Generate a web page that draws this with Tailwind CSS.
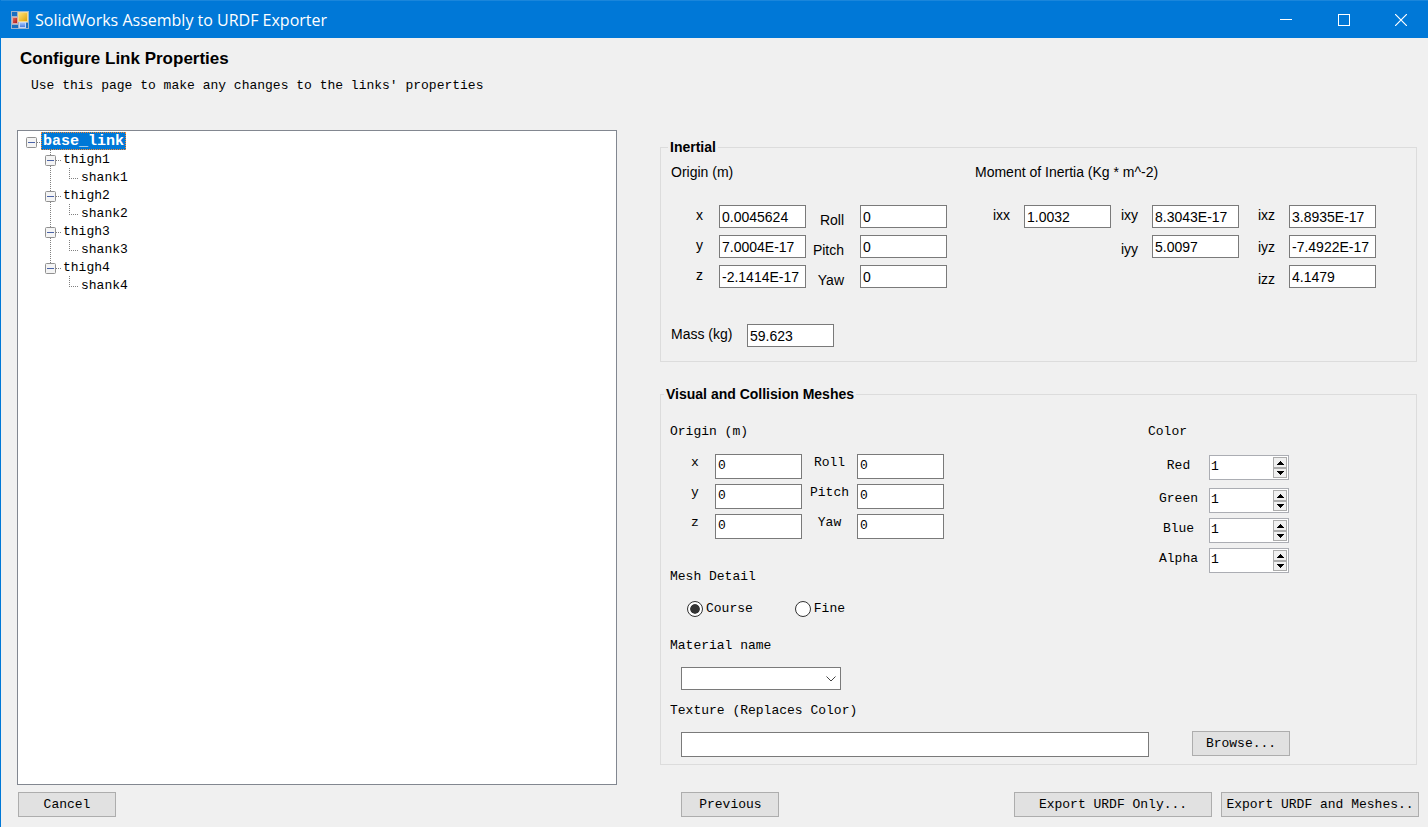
<!DOCTYPE html>
<html lang="en">
<head>
<meta charset="utf-8">
<meta name="viewport" content="width=device-width, initial-scale=1">
<title>SolidWorks Assembly to URDF Exporter</title>
<script src="https://cdn.jsdelivr.net/npm/@tailwindcss/browser@4"></script>
</head>
<body class="flex min-h-screen flex-col border-l border-[#0078d7] bg-[#f0f0f0] font-['Liberation_Mono',monospace] text-[13px] leading-5 text-black">

<!-- Shared symbols -->
<svg class="hidden">
  <symbol id="toggle" viewBox="0 0 11 11"><rect x=".5" y=".5" width="10" height="10" rx="1" fill="#f4f4f4" stroke="#919191"/><path d="M2 5.5h7" stroke="#4b63a7"/></symbol>
  <symbol id="branch" viewBox="0 0 20 18"><path d="M9.5 0v18M15 10.500h5" stroke="#808080" stroke-dasharray="1 1" fill="none"/><use href="#toggle" x="4" y="5" width="11" height="11"/></symbol>
  <symbol id="branch-last" viewBox="0 0 20 18"><path d="M9.5 0v6M15 10.500h5" stroke="#808080" stroke-dasharray="1 1" fill="none"/><use href="#toggle" x="4" y="5" width="11" height="11"/></symbol>
  <symbol id="leaf" viewBox="0 0 38 18"><path d="M9.5 0v18M28.500 0v10M28 10.500h10" stroke="#808080" stroke-dasharray="1 1" fill="none"/></symbol>
  <symbol id="leaf-last" viewBox="0 0 38 18"><path d="M28.500 0v10M28 10.500h10" stroke="#808080" stroke-dasharray="1 1" fill="none"/></symbol>
  <symbol id="up" viewBox="0 0 7 4"><path d="M3 0h1v1h1v1h1v1h1v1H0V3h1V2h1V1h1z"/></symbol>
  <symbol id="down" viewBox="0 0 7 4"><path d="M0 0h7v1H6v1H5v1H4v1H3V3H2V2H1V1H0z"/></symbol>
</svg>

<header class="flex h-[38px] items-center border-t border-[#1a86db] bg-[#0078d7] pl-[10px] text-white">
  <svg class="size-[18px]" viewBox="0 0 18 18">
    <defs>
      <linearGradient id="gold" x1="0" y1="0" x2="1" y2="1"><stop offset="0" stop-color="#ffe680"/><stop offset="1" stop-color="#e0a000"/></linearGradient>
      <linearGradient id="ruby" x1="0" y1="0" x2="1" y2="1"><stop offset="0" stop-color="#e8705f"/><stop offset="1" stop-color="#a81010"/></linearGradient>
      <linearGradient id="azure" x1="0" y1="0" x2="0" y2="1"><stop offset="0" stop-color="#a8c8ff"/><stop offset="1" stop-color="#4478dc"/></linearGradient>
    </defs>
    <rect width="18" height="18" fill="#9db4cc"/>
    <path d="M1 1h5v4H1zM1 14h6v3H1zM15 12h2v5h-2z" fill="#1a6fc0"/>
    <rect x="7.500" y="1.500" width="9" height="9" fill="url(#gold)" stroke="#f4dc90"/>
    <rect x="1.500" y="6.500" width="5" height="6" fill="url(#ruby)" stroke="#d8a8a8"/>
    <rect x="8.500" y="11.500" width="6" height="5" fill="url(#azure)" stroke="#c3d6f7"/>
  </svg>
  <h1 class="ml-1.5 flex-1 font-['Open_Sans',sans-serif] text-[16px]">SolidWorks Assembly to URDF Exporter</h1>
  <div class="flex">
    <button aria-label="Minimize" class="flex h-9 w-[56px] items-center justify-center"><svg class="size-3" viewBox="0 0 12 12"><path d="M0 5.500h12" stroke="#fff"/></svg></button>
    <button aria-label="Maximize" class="flex h-9 w-[60px] items-center justify-center"><svg class="size-3" viewBox="0 0 12 12"><rect x=".5" y=".5" width="11" height="11" fill="none" stroke="#fff"/></svg></button>
    <button aria-label="Close" class="flex h-9 w-[54px] items-center justify-center"><svg class="size-3" viewBox="0 0 12 12"><path d="M0 0l12 12M12 0L0 12" stroke="#fff" stroke-width="1.200"/></svg></button>
  </div>
</header>

<div class="pt-[11px] pl-[19px]">
  <h2 class="font-['Liberation_Sans',sans-serif] text-[17px] font-bold">Configure Link Properties</h2>
  <p class="mt-[7px] pl-[11px]">Use this page to make any changes to the links' properties</p>
</div>

<main class="mt-[34px] grid flex-1 grid-cols-[600fr_757fr] gap-x-[43px] pr-[11px] pl-4">
  <nav aria-label="Links" class="border border-[#828790] bg-white pt-px">
    <ul>
      <li>
        <div class="flex h-[18px] pl-2">
          <svg class="h-[18px] w-[15px]" viewBox="0 0 15 18"><use href="#toggle" x="0" y="5" width="11" height="11"/><path d="M11 10.500h4" stroke="#808080" stroke-dasharray="1 1"/></svg>
          <a href="#base_link" class="h-[18px] bg-[#0078d7] px-0.5 text-[15px] font-bold text-white outline-1 -outline-offset-1 outline-dotted outline-[#ff8728]">base_link</a>
        </div>
        <ul class="pl-[23px]">
          <li>
            <div class="flex h-[18px] gap-0.5"><svg class="h-[18px] w-5"><use href="#branch"/></svg><a href="#thigh1">thigh1</a></div>
            <ul><li class="flex h-[18px] gap-0.5"><svg class="h-[18px] w-[38px]"><use href="#leaf"/></svg><a href="#shank1">shank1</a></li></ul>
          </li>
          <li>
            <div class="flex h-[18px] gap-0.5"><svg class="h-[18px] w-5"><use href="#branch"/></svg><a href="#thigh2">thigh2</a></div>
            <ul><li class="flex h-[18px] gap-0.5"><svg class="h-[18px] w-[38px]"><use href="#leaf"/></svg><a href="#shank2">shank2</a></li></ul>
          </li>
          <li>
            <div class="flex h-[18px] gap-0.5"><svg class="h-[18px] w-5"><use href="#branch"/></svg><a href="#thigh3">thigh3</a></div>
            <ul><li class="flex h-[18px] gap-0.5"><svg class="h-[18px] w-[38px]"><use href="#leaf"/></svg><a href="#shank3">shank3</a></li></ul>
          </li>
          <li>
            <div class="flex h-[18px] gap-0.5"><svg class="h-[18px] w-5"><use href="#branch-last"/></svg><a href="#thigh4">thigh4</a></div>
            <ul><li class="flex h-[18px] gap-0.5"><svg class="h-[18px] w-[38px]"><use href="#leaf-last"/></svg><a href="#shank4">shank4</a></li></ul>
          </li>
        </ul>
      </li>
    </ul>
  </nav>

  <div class="flex flex-col gap-[22px] pt-[7px] pb-5">
    <fieldset class="border border-[#dcdcdc] pb-[14px] font-['Liberation_Sans',sans-serif] text-[14px]">
      <legend class="ml-[7px] px-0.5 font-bold">Inertial</legend>
      <div class="flex pt-[5px] pl-[10px]">
        <h3 class="w-[304px]">Origin (m)</h3>
        <h3>Moment of Inertia (Kg * m^-2)</h3>
      </div>
      <div class="mt-[18px] flex pl-[35px]">
        <div class="flex w-[23px] flex-col leading-[30px]"><label for="ix">x</label><label for="iy">y</label><label for="iz">z</label></div>
        <div class="flex w-[87px] flex-col gap-[7px] pt-[5px]">
          <input id="ix" value="0.0045624" class="h-[23px] w-full border border-[#7a7a7a] bg-white pl-0.5">
          <input id="iy" value="7.0004E-17" class="h-[23px] w-full border border-[#7a7a7a] bg-white pl-0.5">
          <input id="iz" value="-2.1414E-17" class="h-[23px] w-full border border-[#7a7a7a] bg-white pl-0.5">
        </div>
        <div class="flex w-[54px] flex-col pt-[5px] pr-4 text-right leading-[30px]"><label for="iroll">Roll</label><label for="ipitch">Pitch</label><label for="iyaw">Yaw</label></div>
        <div class="flex w-[87px] flex-col gap-[7px] pt-[5px]">
          <input id="iroll" value="0" class="h-[23px] w-full border border-[#7a7a7a] bg-white pl-0.5">
          <input id="ipitch" value="0" class="h-[23px] w-full border border-[#7a7a7a] bg-white pl-0.5">
          <input id="iyaw" value="0" class="h-[23px] w-full border border-[#7a7a7a] bg-white pl-0.5">
        </div>
        <div class="flex w-[77px] flex-col pl-[46px] leading-[30px]"><label for="ixx">ixx</label></div>
        <div class="flex w-[87px] flex-col gap-[7px] pt-[5px]">
          <input id="ixx" value="1.0032" class="h-[23px] w-full border border-[#7a7a7a] bg-white pl-0.5">
        </div>
        <div class="flex w-[41px] flex-col gap-1 pl-[10px] leading-[30px]"><label for="ixy">ixy</label><label for="iyy">iyy</label></div>
        <div class="flex w-[87px] flex-col gap-[7px] pt-[5px]">
          <input id="ixy" value="8.3043E-17" class="h-[23px] w-full border border-[#7a7a7a] bg-white pl-0.5">
          <input id="iyy" value="5.0097" class="h-[23px] w-full border border-[#7a7a7a] bg-white pl-0.5">
        </div>
        <div class="flex w-[50px] flex-col gap-0.5 pl-[19px] leading-[30px]"><label for="ixz">ixz</label><label for="iyz">iyz</label><label for="izz">izz</label></div>
        <div class="flex w-[87px] flex-col gap-[7px] pt-[5px]">
          <input id="ixz" value="3.8935E-17" class="h-[23px] w-full border border-[#7a7a7a] bg-white pl-0.5">
          <input id="iyz" value="-7.4922E-17" class="h-[23px] w-full border border-[#7a7a7a] bg-white pl-0.5">
          <input id="izz" value="4.1479" class="h-[23px] w-full border border-[#7a7a7a] bg-white pl-0.5">
        </div>
      </div>
      <div class="mt-[29px] flex pl-[10px]">
        <label for="mass" class="w-[76px]">Mass (kg)</label>
        <input id="mass" value="59.623" class="h-[23px] w-[87px] border border-[#7a7a7a] bg-white pl-0.5">
      </div>
    </fieldset>

    <fieldset class="border border-[#dcdcdc] pb-[7px]">
      <legend class="ml-[3px] px-0.5 font-['Liberation_Sans',sans-serif] text-[14px] font-bold">Visual and Collision Meshes</legend>
      <div class="flex pt-[18px] pl-[9px]">
        <div class="w-[478px]">
          <h3>Origin (m)</h3>
          <div class="mt-[6px] flex pl-[21px]">
            <div class="flex w-6 flex-col leading-[30px]"><label for="vx">x</label><label for="vy">y</label><label for="vz">z</label></div>
            <div class="flex w-[87px] flex-col gap-[5px] pt-1.5">
              <input id="vx" value="0" class="h-[25px] w-full border border-[#7a7a7a] bg-white pb-0.5 pl-0.5">
              <input id="vy" value="0" class="h-[25px] w-full border border-[#7a7a7a] bg-white pb-0.5 pl-0.5">
              <input id="vz" value="0" class="h-[25px] w-full border border-[#7a7a7a] bg-white pb-0.5 pl-0.5">
            </div>
            <div class="flex w-[55px] flex-col text-center leading-[30px]"><label for="vroll">Roll</label><label for="vpitch">Pitch</label><label for="vyaw">Yaw</label></div>
            <div class="flex w-[87px] flex-col gap-[5px] pt-1.5">
              <input id="vroll" value="0" class="h-[25px] w-full border border-[#7a7a7a] bg-white pb-0.5 pl-0.5">
              <input id="vpitch" value="0" class="h-[25px] w-full border border-[#7a7a7a] bg-white pb-0.5 pl-0.5">
              <input id="vyaw" value="0" class="h-[25px] w-full border border-[#7a7a7a] bg-white pb-0.5 pl-0.5">
            </div>
          </div>
          <h3 class="mt-7">Mesh Detail</h3>
          <div class="mt-3 flex gap-[42px] pl-[17px]">
            <label class="flex items-center gap-[3px]"><input type="radio" name="detail" checked class="size-4 appearance-none rounded-full border border-[#333] bg-white bg-clip-content p-0.5 checked:bg-[#333] checked:shadow-[inset_0_0_0_2px_#fff]">Course</label>
            <label class="flex items-center gap-[3px]"><input type="radio" name="detail" class="size-4 appearance-none rounded-full border border-[#333] bg-white checked:bg-[#333]">Fine</label>
          </div>
        </div>
        <div>
          <h3>Color</h3>
          <div class="mt-[13px] grid grid-cols-[61px_80px] gap-y-[5px] leading-[22px]">
            <label for="red" class="mb-[3px] text-center">Red</label>
            <div class="mb-[3px] flex h-[25px] border border-[#abadb3] bg-white p-px">
              <input id="red" type="number" value="1" class="min-w-0 flex-1 appearance-none pb-0.5 [-moz-appearance:textfield] [&::-webkit-inner-spin-button]:appearance-none">
              <div class="flex w-[14px] flex-col"><button aria-label="Increase red" class="flex h-[11px] items-center justify-center border border-[#acacac] bg-[#f0f0f0]"><svg class="h-1 w-[7px]"><use href="#up"/></svg></button><button aria-label="Decrease red" class="flex h-[10px] items-center justify-center border border-[#acacac] bg-[#f0f0f0]"><svg class="h-1 w-[7px]"><use href="#down"/></svg></button></div>
            </div>
            <label for="green" class="text-center">Green</label>
            <div class="flex h-[25px] border border-[#abadb3] bg-white p-px">
              <input id="green" type="number" value="1" class="min-w-0 flex-1 appearance-none pb-0.5 [-moz-appearance:textfield] [&::-webkit-inner-spin-button]:appearance-none">
              <div class="flex w-[14px] flex-col"><button aria-label="Increase green" class="flex h-[11px] items-center justify-center border border-[#acacac] bg-[#f0f0f0]"><svg class="h-1 w-[7px]"><use href="#up"/></svg></button><button aria-label="Decrease green" class="flex h-[10px] items-center justify-center border border-[#acacac] bg-[#f0f0f0]"><svg class="h-1 w-[7px]"><use href="#down"/></svg></button></div>
            </div>
            <label for="blue" class="text-center">Blue</label>
            <div class="flex h-[25px] border border-[#abadb3] bg-white p-px">
              <input id="blue" type="number" value="1" class="min-w-0 flex-1 appearance-none pb-0.5 [-moz-appearance:textfield] [&::-webkit-inner-spin-button]:appearance-none">
              <div class="flex w-[14px] flex-col"><button aria-label="Increase blue" class="flex h-[11px] items-center justify-center border border-[#acacac] bg-[#f0f0f0]"><svg class="h-1 w-[7px]"><use href="#up"/></svg></button><button aria-label="Decrease blue" class="flex h-[10px] items-center justify-center border border-[#acacac] bg-[#f0f0f0]"><svg class="h-1 w-[7px]"><use href="#down"/></svg></button></div>
            </div>
            <label for="alpha" class="text-center">Alpha</label>
            <div class="flex h-[25px] border border-[#abadb3] bg-white p-px">
              <input id="alpha" type="number" value="1" class="min-w-0 flex-1 appearance-none pb-0.5 [-moz-appearance:textfield] [&::-webkit-inner-spin-button]:appearance-none">
              <div class="flex w-[14px] flex-col"><button aria-label="Increase alpha" class="flex h-[11px] items-center justify-center border border-[#acacac] bg-[#f0f0f0]"><svg class="h-1 w-[7px]"><use href="#up"/></svg></button><button aria-label="Decrease alpha" class="flex h-[10px] items-center justify-center border border-[#acacac] bg-[#f0f0f0]"><svg class="h-1 w-[7px]"><use href="#down"/></svg></button></div>
            </div>
          </div>
        </div>
      </div>
      <div class="mt-[17px] flex flex-col pl-[9px]">
        <label for="material">Material name</label>
        <div class="mt-[11px] ml-[11px] grid w-40">
          <select id="material" class="col-start-1 row-start-1 h-[23px] appearance-none border border-[#7a7a7a] bg-white"><option></option></select>
          <svg class="pointer-events-none col-start-1 row-start-1 mr-[5px] h-[6px] w-[10px] self-center justify-self-end" viewBox="0 0 10 6"><path d="M.5.5L5 5 9.500.5" fill="none" stroke="#444"/></svg>
        </div>
        <label for="texture" class="mt-[11px]">Texture (Replaces Color)</label>
        <div class="mt-[10px] flex items-end gap-[43px] pl-[11px]">
          <input id="texture" class="h-[25px] w-[468px] border border-[#7a7a7a] bg-white pl-0.5">
          <button class="mb-px h-[25px] w-[98px] border border-[#adadad] bg-[#e1e1e1]">Browse...</button>
        </div>
      </div>
    </fieldset>
  </div>
</main>

<footer class="mt-[7px] grid grid-cols-[600fr_757fr] gap-x-[43px] pr-[9px] pb-[10px] pl-[17px]">
  <div><button class="h-[25px] w-[98px] border border-[#adadad] bg-[#e1e1e1]">Cancel</button></div>
  <div class="flex gap-[9px] pl-5">
    <button class="mr-auto h-[25px] w-[98px] border border-[#adadad] bg-[#e1e1e1]">Previous</button>
    <button class="h-[25px] w-[198px] border border-[#adadad] bg-[#e1e1e1]">Export URDF Only...</button>
    <button class="h-[25px] w-[198px] border border-[#adadad] bg-[#e1e1e1] whitespace-nowrap">Export URDF and Meshes..</button>
  </div>
</footer>
</body>
</html>
